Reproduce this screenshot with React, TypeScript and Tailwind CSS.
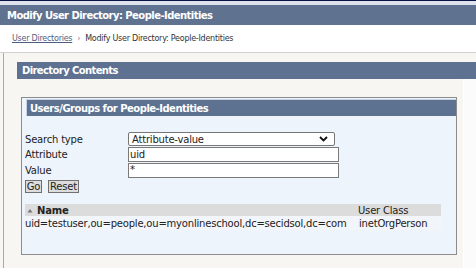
import React from "react";

const F = { fontFamily: '"DejaVu Sans", Verdana, sans-serif' };

export default function App() {
  return (
    <div className="w-[476px] h-[268px] overflow-hidden bg-[#f7f6f3] flex flex-col text-[#222]" style={F}>
      <div className="h-px bg-[#0b1446]" />
      <div className="h-[4px] bg-[#dde2ec]" />
      <div className="h-[20px] bg-[#5f7390] text-white font-bold text-[10px] tracking-[-0.55px] pl-[7px] flex items-center">
        Modify User Directory: People-Identities
      </div>
      <div className="h-[27px] bg-white pl-[12px] flex items-center text-[8px] tracking-[-0.25px] text-[#333]">
        <span className="underline text-[#4f5f82]">User Directories</span>
        <span className="mx-[5px] text-[#888]">›</span>
        <span>Modify User Directory: People-Identities</span>
      </div>
      <div className="h-px bg-[#d0d0cc]" />
      <div className="flex flex-1">
        <div className="w-[3px]" />
        <div className="w-px bg-[#a9a9a9]" />
        <div className="flex-1 flex flex-col">
          <div className="pt-[9px] pl-[13px]">
            <div className="h-[17px] bg-[#5e7190] text-white font-bold text-[10px] tracking-[-0.6px] pl-[5px] flex items-center">
              Directory Contents
            </div>
          </div>
          <div className="flex flex-1">
            <div className="w-[459px]">
              <div className="ml-[17px] mt-[18px] w-[436px] h-[158px] border border-[#8c8c8c] bg-[#eef4fc] flex flex-col">
                <div className="ml-[4px] mt-[1px] h-[17px] bg-[#5d7191] border-t border-l border-[#c9d2e2] text-white font-bold text-[10px] tracking-[-0.5px] pl-[3px] flex items-center">
                  Users/Groups for People-Identities
                </div>
                <div className="pl-[3px] mt-[16px] text-[10px] tracking-[-0.2px]">
                  <div className="flex items-center h-[14px]">
                    <div className="w-[103px]">Search type</div>
                    <div className="w-[207px] h-[14px] bg-white border border-[#767676] rounded-[2px] flex items-center justify-between pl-[3px] pr-[6px]">
                      <span>Attribute-value</span>
                      <svg width="9" height="6" viewBox="0 0 9 6">
                        <path d="M1 1 L4.5 4.5 L8 1" fill="none" stroke="#111" strokeWidth="1.8" />
                      </svg>
                    </div>
                  </div>
                  <div className="flex items-center h-[15px] mt-[1px]">
                    <div className="w-[103px]">Attribute</div>
                    <div className="w-[211px] h-[15px] bg-white border border-[#7a7a7a] pl-[1px] flex items-center">uid</div>
                  </div>
                  <div className="flex items-center h-[15px] mt-[1px]">
                    <div className="w-[103px]">Value</div>
                    <div className="w-[211px] h-[15px] bg-white border border-[#7a7a7a] pl-[1px] flex items-start leading-[12px]">*</div>
                  </div>
                  <div className="flex items-center mt-[2px] gap-[6px]">
                    <div className="w-[17px] h-[13px] bg-[#dddddd] border border-[#707070] flex items-center justify-center">Go</div>
                    <div className="w-[31px] h-[13px] bg-[#dddddd] border border-[#707070] flex items-center justify-center">Reset</div>
                  </div>
                  <div className="mt-[11px] w-[416px]">
                    <div className="h-[12px] bg-[#dcdcdc] flex items-center">
                      <div className="w-[333px] flex items-center">
                        <svg width="6" height="5" viewBox="0 0 6 5" className="ml-[2px] mr-[4px]">
                          <path d="M0.5 4.5 L3 1 L5.5 4.5 Z" fill="#777" />
                        </svg>
                        <span className="font-bold">Name</span>
                      </div>
                      <span>User Class</span>
                    </div>
                    <div className="h-[14px] bg-[#f2f5f9] flex items-center">
                      <div className="w-[334px]">uid=testuser,ou=people,ou=myonlineschool,dc=secidsol,dc=com</div>
                      <span>inetOrgPerson</span>
                    </div>
                  </div>
                </div>
              </div>
            </div>
            <div className="flex-1 bg-[#fbfbfb] border-l border-white" />
          </div>
        </div>
      </div>
    </div>
  );
}
